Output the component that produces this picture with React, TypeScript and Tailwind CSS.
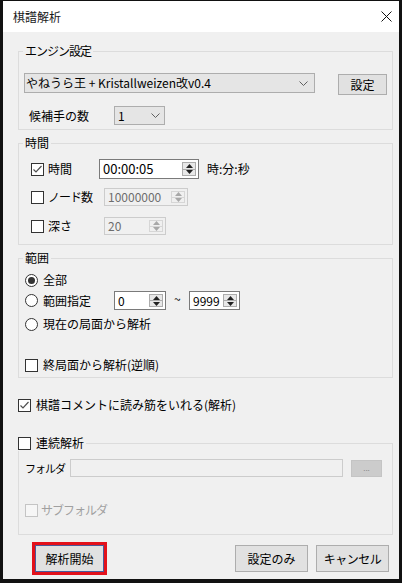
import React from "react";

const F = "font-['Noto_Sans_CJK_JP','Noto_Sans',sans-serif]";

function Chevron() {
  return (
    <svg width="9" height="5" viewBox="0 0 9 5" className="shrink-0">
      <polyline points="0.5,0.5 4.5,4.5 8.5,0.5" fill="none" stroke="#606060" strokeWidth="1" />
    </svg>
  );
}

function Combo({ text, className, chevronClass }: { text: string; className: string; chevronClass: string }) {
  return (
    <div className={`flex items-center justify-between border border-[#adadad] bg-[#e5e5e5] ${className}`}>
      <span className="leading-[16px] whitespace-nowrap">{text}</span>
      <span className={chevronClass}>
        <Chevron />
      </span>
    </div>
  );
}

function Tri({ up, color }: { up: boolean; color: string }) {
  return (
    <svg width="7" height="4" viewBox="0 0 7 4">
      {up ? <polygon points="0,4 3.5,0 7,4" fill={color} /> : <polygon points="0,0 3.5,4 7,0" fill={color} />}
    </svg>
  );
}

function Spin({ value, className, disabled }: { value: string; className: string; disabled?: boolean }) {
  const tri = disabled ? "#a8a8a8" : "#222222";
  return (
    <div
      className={`flex items-stretch border ${
        disabled ? "border-[#cccccc] bg-[#f0f0f0] text-[#6d6d6d]" : "border-[#7a7a7a] bg-white text-black"
      } ${className}`}
    >
      <div className="flex-1 flex items-center pl-[3px] leading-[16px]">{value}</div>
      <div
        className={`my-[2px] mr-[2px] w-[14px] flex flex-col border ${
          disabled ? "border-[#d6d6d6] bg-[#f0f0f0]" : "border-[#acacac] bg-[#e8e8e8]"
        }`}
      >
        <div className="flex-1 flex items-center justify-center">
          <Tri up color={tri} />
        </div>
        <div className={`h-px ${disabled ? "bg-[#d6d6d6]" : "bg-[#acacac]"}`} />
        <div className="flex-1 flex items-center justify-center">
          <Tri up={false} color={tri} />
        </div>
      </div>
    </div>
  );
}

function Check({ checked, disabled }: { checked?: boolean; disabled?: boolean }) {
  return (
    <div
      className={`w-[13px] h-[13px] shrink-0 border flex items-center justify-center ${
        disabled ? "border-[#c4c4c4] bg-[#f6f6f6]" : "border-[#333333] bg-white"
      }`}
    >
      {checked && (
        <svg width="11" height="11" viewBox="0 0 11 11">
          <polyline points="1.5,5.5 4,8 9.5,2" fill="none" stroke="#505050" strokeWidth="1.2" />
        </svg>
      )}
    </div>
  );
}

function Radio({ checked }: { checked?: boolean }) {
  return (
    <div className="w-[13px] h-[13px] shrink-0 rounded-full border border-[#333333] bg-white flex items-center justify-center">
      {checked && <div className="w-[7px] h-[7px] rounded-full bg-[#333333]" />}
    </div>
  );
}

function Btn({ text, className }: { text: string; className: string }) {
  return (
    <div className={`flex items-center justify-center border border-[#adadad] bg-[#e1e1e1] leading-[16px] whitespace-nowrap ${className}`}>
      {text}
    </div>
  );
}

export default function App() {
  return (
    <div className={`${F} text-[12px] text-black w-[402px] h-[583px] bg-[#111111] pt-px pl-[3px] pr-[3px] pb-[4px]`}>
      <div className="w-full h-full flex flex-col bg-[#f0f0f0]">
        {/* title bar */}
        <div className="h-[31px] shrink-0 bg-white flex items-center justify-between pl-[10px] pr-[7px]">
          <span className="leading-[16px] text-[#1a1a1a]">棋譜解析</span>
          <svg width="11" height="11" viewBox="0 0 11 11">
            <line x1="0.5" y1="0.5" x2="10.5" y2="10.5" stroke="#111" strokeWidth="1" />
            <line x1="10.5" y1="0.5" x2="0.5" y2="10.5" stroke="#111" strokeWidth="1" />
          </svg>
        </div>

        <div className="flex flex-col pl-[15px] pr-[6px]">
          {/* エンジン設定 */}
          <fieldset className="mt-[11px] h-[87px] border border-[#dcdcdc] p-0 m-0 min-w-0">
            <legend className="ml-[4px] px-[2px] leading-[16px] tracking-[-1px]">エンジン設定</legend>
            <div className="flex items-start mt-[14px] ml-[5px]">
              <Combo
                text="やねうら王 + Kristallweizen改v0.4"
                className="w-[291px] h-[20px] pl-[1px]"
                chevronClass="mr-[6px]"
              />
              <Btn text="設定" className="ml-[23px] mt-[1px] w-[49px] h-[21px]" />
            </div>
            <div className="flex items-center mt-[11px] ml-[10px] h-[19px]">
              <span className="w-[85px] leading-[16px]">候補手の数</span>
              <Combo text="1" className="w-[51px] h-[19px] pl-[3px]" chevronClass="mr-[4px]" />
            </div>
          </fieldset>

          {/* 時間 */}
          <fieldset className="mt-[5px] h-[110px] border border-[#dcdcdc] p-0 m-0 min-w-0">
            <legend className="ml-[4px] px-[2px] leading-[16px]">時間</legend>
            <div className="flex items-center mt-[8px] ml-[12px] h-[20px]">
              <Check checked />
              <span className="ml-[4px] w-[51px] leading-[16px]">時間</span>
              <Spin value="00:00:05" className="w-[100px] h-[20px] text-[13px]" />
              <span className="ml-[8px] leading-[16px]">時:分:秒</span>
            </div>
            <div className="flex items-center mt-[9px] ml-[12px] h-[18px]">
              <Check />
              <span className="ml-[4px] w-[56px] leading-[16px] whitespace-nowrap tracking-[-1px]">ノード数</span>
              <Spin value="10000000" disabled className="w-[84px] h-[18px]" />
            </div>
            <div className="flex items-center mt-[11px] ml-[12px] h-[18px]">
              <Check />
              <span className="ml-[4px] w-[56px] leading-[16px]">深さ</span>
              <Spin value="20" disabled className="w-[62px] h-[18px]" />
            </div>
          </fieldset>

          {/* 範囲 */}
          <fieldset className="mt-[5px] h-[128px] border border-[#dcdcdc] p-0 m-0 min-w-0">
            <legend className="ml-[4px] px-[2px] leading-[16px]">範囲</legend>
            <div className="flex items-center mt-[6px] ml-[6px] h-[16px]">
              <Radio checked />
              <span className="ml-[5px] leading-[16px]">全部</span>
            </div>
            <div className="flex items-center mt-[3px] ml-[6px] h-[19px]">
              <Radio />
              <span className="ml-[5px] w-[71px] leading-[16px]">範囲指定</span>
              <Spin value="0" className="w-[52px] h-[19px]" />
              <span className="ml-[8px] w-[15px] leading-[16px] -mt-[4px]">~</span>
              <Spin value="9999" className="w-[51px] h-[19px]" />
            </div>
            <div className="flex items-center mt-[6px] ml-[6px] h-[16px]">
              <Radio />
              <span className="ml-[5px] leading-[16px]">現在の局面から解析</span>
            </div>
            <div className="flex items-center mt-[25px] ml-[6px] h-[16px]">
              <Check />
              <span className="ml-[5px] leading-[16px]">終局面から解析(逆順)</span>
            </div>
          </fieldset>

          {/* 棋譜コメント */}
          <div className="flex items-center mt-[19px] h-[16px]">
            <Check checked />
            <span className="ml-[5px] leading-[16px]">棋譜コメントに読み筋をいれる(解析)</span>
          </div>

          {/* 連続解析 */}
          <fieldset className="mt-[22px] h-[100px] border border-[#dcdcdc] p-0 m-0 min-w-0">
            <legend className="-ml-[1px] pr-[2px] leading-[16px]">
              <span className="flex items-center">
                <Check />
                <span className="ml-[5px]">連続解析</span>
              </span>
            </legend>
            <div className="flex items-center mt-[8px] ml-[6px] h-[18px]">
              <span className="w-[45px] leading-[16px] whitespace-nowrap text-[11px] tracking-[-1px]">フォルダ</span>
              <div className="w-[273px] h-[18px] border border-[#cccccc] bg-[#f0f0f0]" />
              <div className="ml-[8px] w-[31px] h-[17px] border border-[#c4c4c4] bg-[#cccccc] flex items-center justify-center text-[8px] text-[#8a8a8a] leading-none">
                ...
              </div>
            </div>
            <div className="flex items-center mt-[25px] ml-[6px] h-[16px]">
              <Check disabled />
              <span className="ml-[3px] leading-[16px] text-[#a0a0a0] tracking-[-1px]">サブフォルダ</span>
            </div>
          </fieldset>
        </div>

        {/* buttons */}
        <div className="flex items-start mt-[7px] pl-[29px] pr-[10px]">
          <div className="w-[75px] h-[33px] border-[3px] border-[#e3111b]">
            <div className="w-full h-full flex items-center justify-center border border-[#4a5a9a] bg-[#e1e1e1] leading-[16px]">
              解析開始
            </div>
          </div>
          <div className="flex-1" />
          <Btn text="設定のみ" className="mt-[3px] w-[73px] h-[27px]" />
          <Btn text="キャンセル" className="mt-[3px] ml-[8px] w-[73px] h-[27px] tracking-[-0.5px]" />
        </div>
      </div>
    </div>
  );
}
